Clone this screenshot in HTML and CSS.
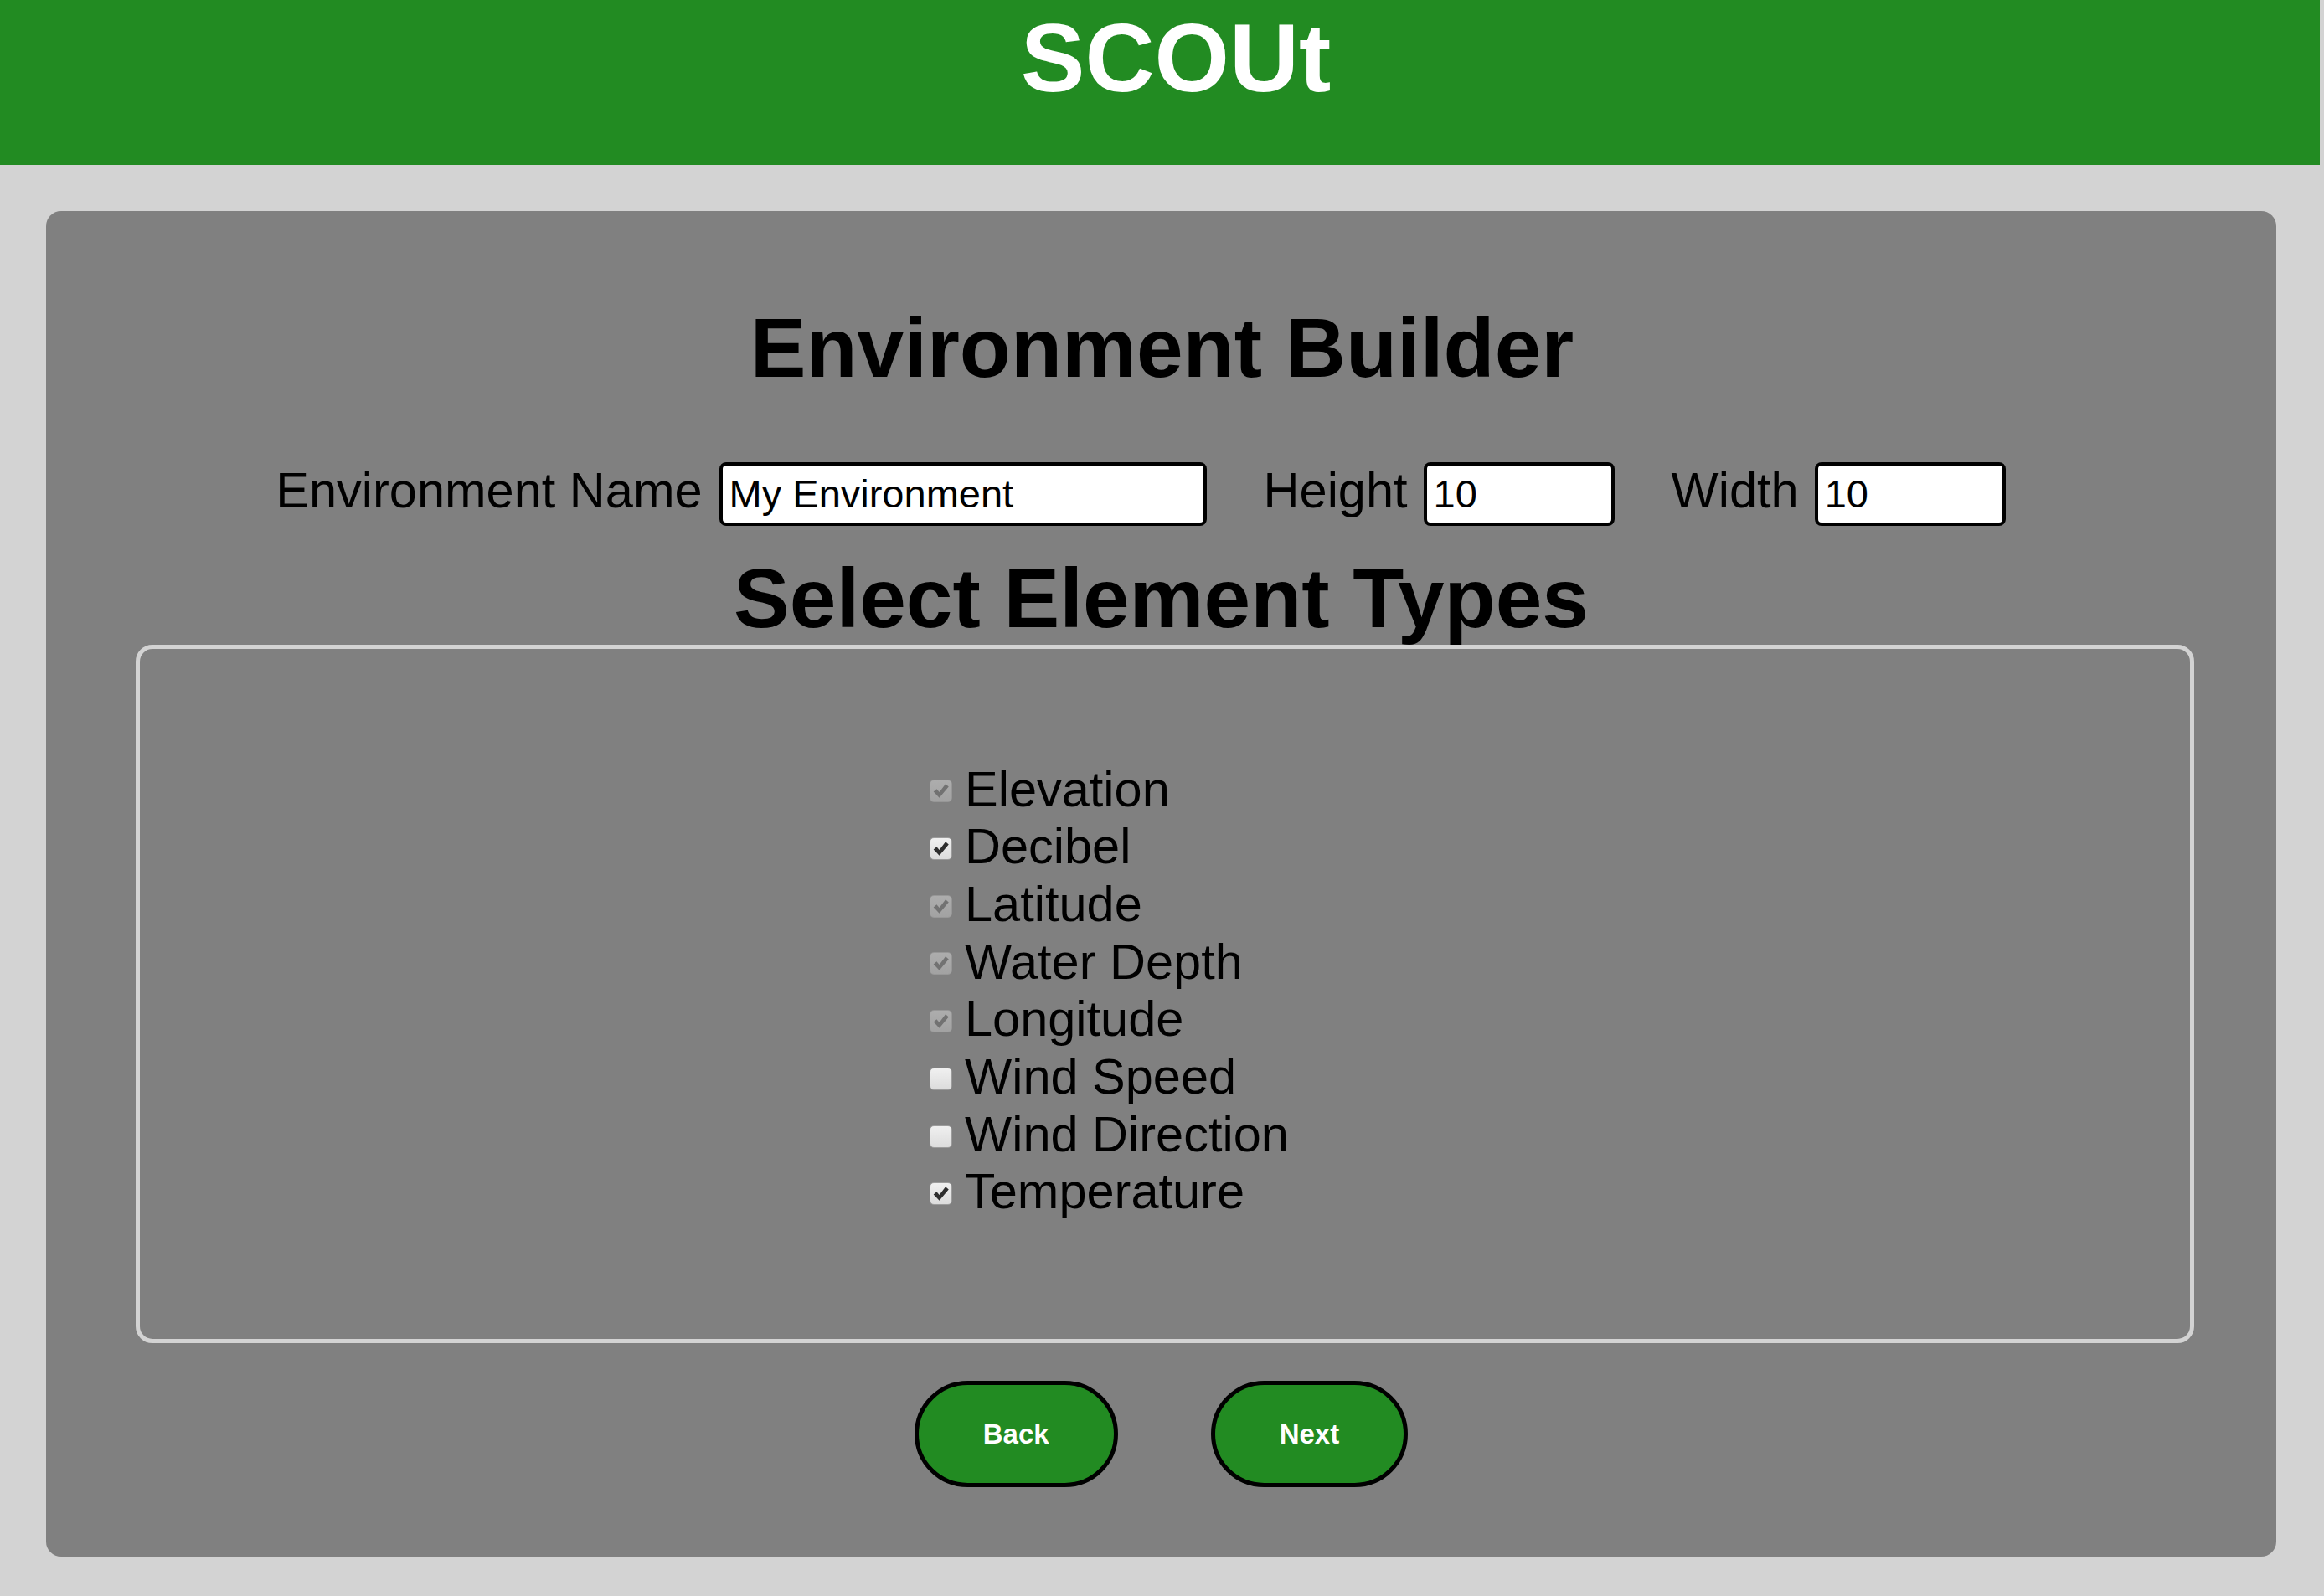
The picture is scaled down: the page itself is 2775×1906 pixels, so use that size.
FILE: index.html
```html
<!DOCTYPE html>
<html lang="en">
<head>
<meta charset="utf-8">
<title>SCOUt - Environment Builder</title>
<link rel="stylesheet" href="styles.css">
</head>
<body>
<header class="topbar">
  <h1 class="brand">SCOUt</h1>
</header>
<main class="card">
  <h2 class="title">Environment Builder</h2>
  <div class="fields">
    <label class="field-label" for="env-name">Environment Name</label>
    <input class="field-input wide" id="env-name" type="text" value="My Environment">
    <label class="field-label spaced" for="env-height">Height</label>
    <input class="field-input narrow" id="env-height" type="text" value="10">
    <label class="field-label spaced" for="env-width">Width</label>
    <input class="field-input narrow" id="env-width" type="text" value="10">
  </div>
  <h2 class="title subtitle">Select Element Types</h2>
  <section class="types">
    <ul class="type-list">
      <li class="type-row"><span class="box disabled"><svg viewBox="0 0 27 27"><path d="M4 14.5 L8 11 L11.5 15 L19.5 4.5 L23.5 8 L11.5 22.5 Z"/></svg></span><span class="type-name">Elevation</span></li>
      <li class="type-row"><span class="box checked"><svg viewBox="0 0 27 27"><path d="M4 14.5 L8 11 L11.5 15 L19.5 4.5 L23.5 8 L11.5 22.5 Z"/></svg></span><span class="type-name">Decibel</span></li>
      <li class="type-row"><span class="box disabled"><svg viewBox="0 0 27 27"><path d="M4 14.5 L8 11 L11.5 15 L19.5 4.5 L23.5 8 L11.5 22.5 Z"/></svg></span><span class="type-name">Latitude</span></li>
      <li class="type-row"><span class="box disabled"><svg viewBox="0 0 27 27"><path d="M4 14.5 L8 11 L11.5 15 L19.5 4.5 L23.5 8 L11.5 22.5 Z"/></svg></span><span class="type-name">Water Depth</span></li>
      <li class="type-row"><span class="box disabled"><svg viewBox="0 0 27 27"><path d="M4 14.5 L8 11 L11.5 15 L19.5 4.5 L23.5 8 L11.5 22.5 Z"/></svg></span><span class="type-name">Longitude</span></li>
      <li class="type-row"><span class="box"></span><span class="type-name">Wind Speed</span></li>
      <li class="type-row"><span class="box"></span><span class="type-name">Wind Direction</span></li>
      <li class="type-row"><span class="box checked"><svg viewBox="0 0 27 27"><path d="M4 14.5 L8 11 L11.5 15 L19.5 4.5 L23.5 8 L11.5 22.5 Z"/></svg></span><span class="type-name">Temperature</span></li>
    </ul>
  </section>
  <div class="actions">
    <button class="btn" type="button">Back</button>
    <button class="btn" type="button">Next</button>
  </div>
</main>
</body>
</html>
```

FILE: styles.css
```css
html, body {
  margin: 0;
  padding: 0;
  background: #d3d3d3;
  font-family: "Liberation Sans", Arial, sans-serif;
  color: #000;
}

.topbar {
  width: 2770px;
  height: 197px;
  background: #228b22;
  box-sizing: border-box;
  padding-top: 3px;
  padding-left: 38px;
  text-align: center;
}

.brand {
  margin: 0;
  font-size: 115px;
  font-weight: bold;
  color: #fff;
  line-height: normal;
}

.card {
  width: 2663px;
  margin: 55px 0 48px 55px;
  box-sizing: border-box;
  background: #808080;
  border-radius: 18px;
  padding: 106px 0 83px;
  display: flex;
  flex-direction: column;
}

.title {
  margin: 0;
  font-size: 100px;
  font-weight: bold;
  line-height: 115px;
  text-align: center;
  padding-left: 2px;
}

.subtitle {
  margin-top: 30px;
  line-height: 112px;
  padding-left: 0;
}

.fields {
  margin-top: 78px;
  display: flex;
  justify-content: center;
  align-items: baseline;
  padding-right: 49px;
}

.field-label {
  font-size: 59.5px;
  line-height: normal;
  margin-right: 20px;
}

.field-label.spaced {
  margin-left: 68px;
  margin-right: 19px;
}

.field-input {
  box-sizing: border-box;
  height: 76px;
  border: 4px solid #000;
  border-radius: 8px;
  background: #fff;
  font-family: "Liberation Sans", Arial, sans-serif;
  font-size: 47px;
  color: #000;
  padding: 0 8px;
  margin: 0;
  outline: none;
}

.field-input.wide {
  width: 582px;
}

.field-input.narrow {
  width: 228px;
}

.types {
  margin: 0 98px 0 107px;
  border: 5px solid #d3d3d3;
  border-radius: 20px;
  padding: 134px 0 141px;
}

.type-list {
  list-style: none;
  margin: 0 auto;
  padding: 0;
  width: 562px;
}

.type-row {
  display: flex;
  align-items: center;
  font-size: 59.5px;
  line-height: 68.7px;
}

.box {
  flex: none;
  width: 27px;
  height: 27px;
  box-sizing: border-box;
  border: 1.5px solid #9c9c9c;
  border-radius: 5px;
  background: linear-gradient(#f0f0f0, #dcdcdc);
  margin-right: 15px;
  margin-top: 4px;
  display: flex;
  align-items: center;
  justify-content: center;
}

.box svg {
  width: 25px;
  height: 25px;
  fill: #2e2e2e;
}

.box.disabled {
  background: linear-gradient(#adadad, #a2a2a2);
  border-color: #979797;
}

.box.disabled svg {
  fill: #727272;
}

.actions {
  margin-top: 45px;
  display: flex;
  justify-content: center;
  gap: 111px;
}

.btn {
  box-sizing: border-box;
  height: 127px;
  padding: 0 77px;
  border: 5px solid #000;
  border-radius: 64px;
  background: #228b22;
  color: #fff;
  font-family: "Liberation Sans", Arial, sans-serif;
  font-size: 33px;
  font-weight: bold;
  cursor: pointer;
}
```
